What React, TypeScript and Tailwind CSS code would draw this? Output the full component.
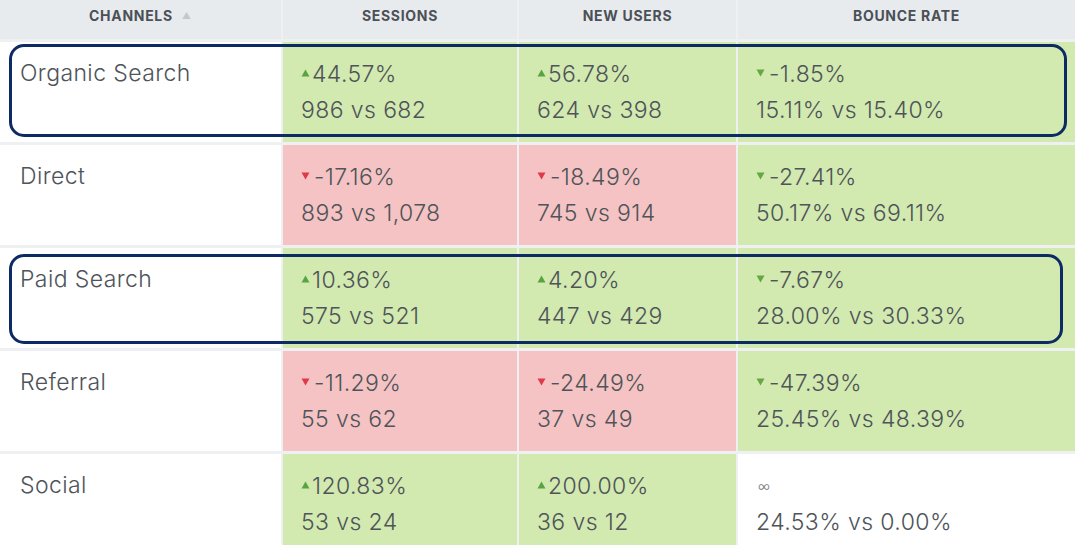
import React from 'react';

type Tone = 'up' | 'down-good' | 'down-bad' | 'none';

interface Metric {
  change: string;
  compare: string;
  tone: Tone;
  bg: 'green' | 'red' | 'white';
}

interface Row {
  channel: string;
  highlight?: string;
  metrics: Metric[];
}

const rows: Row[] = [
  {
    channel: 'Organic Search',
    highlight: 'top-[2px] bottom-[5px] left-[9px] right-[8px]',
    metrics: [
      { change: '44.57%', compare: '986 vs 682', tone: 'up', bg: 'green' },
      { change: '56.78%', compare: '624 vs 398', tone: 'up', bg: 'green' },
      { change: '-1.85%', compare: '15.11% vs 15.40%', tone: 'down-good', bg: 'green' },
    ],
  },
  {
    channel: 'Direct',
    metrics: [
      { change: '-17.16%', compare: '893 vs 1,078', tone: 'down-bad', bg: 'red' },
      { change: '-18.49%', compare: '745 vs 914', tone: 'down-bad', bg: 'red' },
      { change: '-27.41%', compare: '50.17% vs 69.11%', tone: 'down-good', bg: 'green' },
    ],
  },
  {
    channel: 'Paid Search',
    highlight: 'top-[6px] bottom-[4px] left-[9px] right-[12px]',
    metrics: [
      { change: '10.36%', compare: '575 vs 521', tone: 'up', bg: 'green' },
      { change: '4.20%', compare: '447 vs 429', tone: 'up', bg: 'green' },
      { change: '-7.67%', compare: '28.00% vs 30.33%', tone: 'down-good', bg: 'green' },
    ],
  },
  {
    channel: 'Referral',
    metrics: [
      { change: '-11.29%', compare: '55 vs 62', tone: 'down-bad', bg: 'red' },
      { change: '-24.49%', compare: '37 vs 49', tone: 'down-bad', bg: 'red' },
      { change: '-47.39%', compare: '25.45% vs 48.39%', tone: 'down-good', bg: 'green' },
    ],
  },
  {
    channel: 'Social',
    metrics: [
      { change: '120.83%', compare: '53 vs 24', tone: 'up', bg: 'green' },
      { change: '200.00%', compare: '36 vs 12', tone: 'up', bg: 'green' },
      { change: '∞', compare: '24.53% vs 0.00%', tone: 'none', bg: 'white' },
    ],
  },
];

const cols = 'grid grid-cols-[281px_234px_217px_1fr] gap-x-[2px]';
const body = 'text-[23px] leading-[36px] tracking-[0.4px] font-light text-[#4e5459]';

function Arrow({ tone }: { tone: Tone }) {
  if (tone === 'none') return null;
  if (tone === 'up') {
    return (
      <svg width="9" height="8" viewBox="0 0 9 8" className="mr-[2px] mb-[2px]">
        <path d="M4.5 0.5 L8.5 7.5 L0.5 7.5 Z" fill="#58a441" />
      </svg>
    );
  }
  return (
    <svg width="9" height="8" viewBox="0 0 9 8" className="mr-[4px] mb-[2px]">
      <path d="M0.5 0.5 L8.5 0.5 L4.5 7.5 Z" fill={tone === 'down-bad' ? '#e03a48' : '#64a842'} />
    </svg>
  );
}

function MetricCell({ m }: { m: Metric }) {
  const bg = m.bg === 'green' ? 'bg-[#d2e9b0]' : m.bg === 'red' ? 'bg-[#f5c3c3]' : 'bg-white';
  return (
    <div className={`${bg} pl-[18px] pt-[14px] ${body}`}>
      <div className="flex items-center">
        <Arrow tone={m.tone} />
        {m.tone === 'none' ? (
          <span className="text-[13px] text-[#777] pl-[2px]">{m.change}</span>
        ) : (
          <span>{m.change}</span>
        )}
      </div>
      <div>{m.compare}</div>
    </div>
  );
}

export default function App() {
  return (
    <div className="w-[1075px] h-[545px] overflow-hidden bg-[#eef0f2] font-['Inter',sans-serif] flex flex-col gap-y-[3px]">
      <div className={`${cols} bg-[#eef0f2] h-[39px] shrink-0`}>
        {['CHANNELS', 'SESSIONS', 'NEW USERS', 'BOUNCE RATE'].map((h, i) => (
          <div
            key={h}
            className="bg-[#e8ebee] flex justify-center items-start pt-[7px] text-[14px] leading-[18px] tracking-[0.7px] font-bold text-[#4b5057]"
          >
            {h}
            {i === 0 && <span className="ml-[9px] text-[9px] text-[#c4c8cc] leading-[18px]">▲</span>}
          </div>
        ))}
      </div>
      {rows.map((r) => (
        <div key={r.channel} className={`${cols} relative h-[100px] shrink-0`}>
          <div className={`bg-white pl-[20px] pt-[13px] ${body}`}>{r.channel}</div>
          {r.metrics.map((m, i) => (
            <MetricCell key={i} m={m} />
          ))}
          {r.highlight && (
            <div className={`absolute ${r.highlight} rounded-[15px] border-[3px] border-[#0c2a63] pointer-events-none`} />
          )}
        </div>
      ))}
    </div>
  );
}
